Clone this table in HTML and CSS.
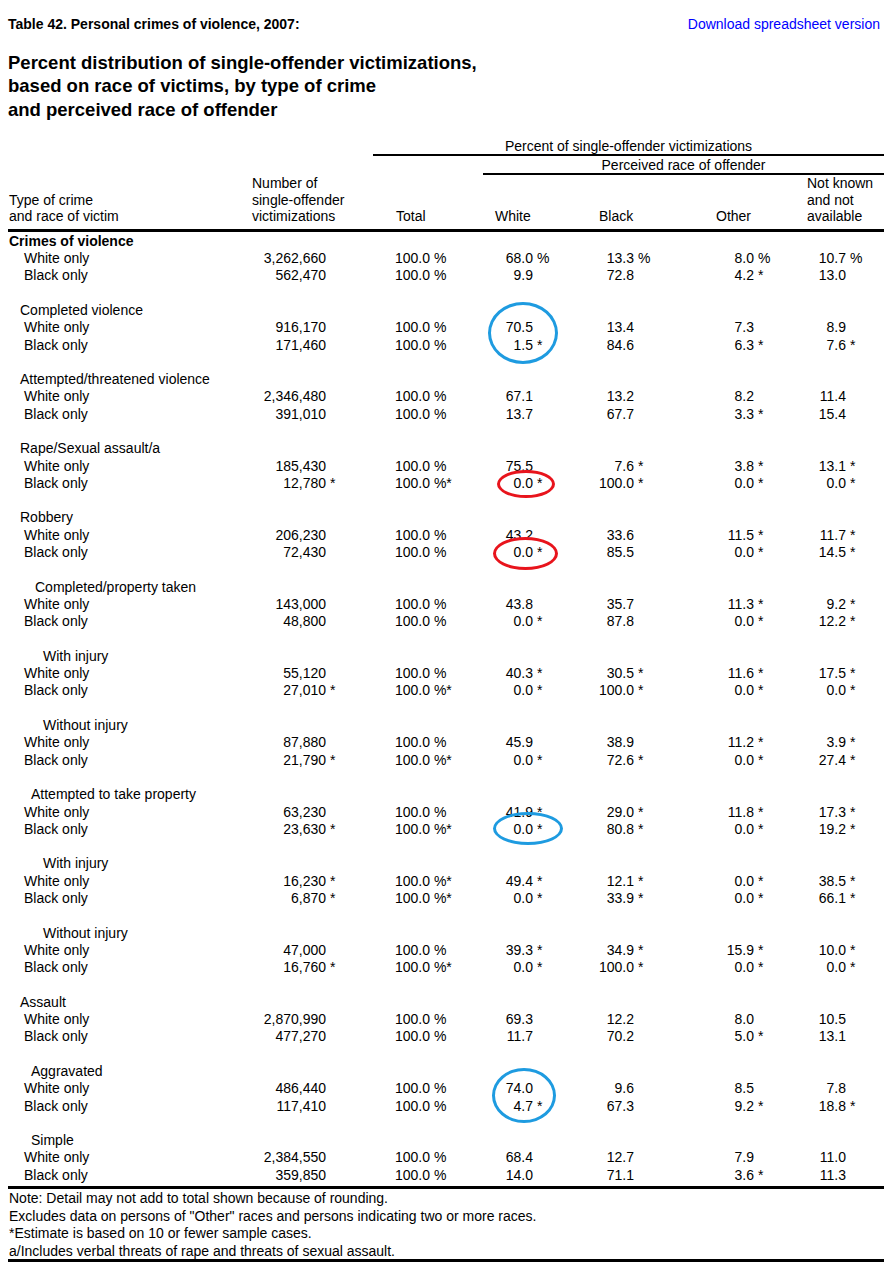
FILE: index.html
```html
<!DOCTYPE html>
<html lang="en">
<head>
<meta charset="utf-8">
<title>Table 42. Personal crimes of violence, 2007</title>
<link rel="stylesheet" href="styles.css">
</head>
<body>
<div class="page">
  <div class="top">
    <span class="tnum">Table 42. Personal crimes of violence, 2007:</span>
    <a class="dl" href="#">Download spreadsheet version</a>
  </div>
  <h1 class="title">Percent distribution of single-offender victimizations,<br>based on race of victims, by type of crime<br>and perceived race of offender</h1>

  <table class="data">
    <colgroup>
      <col class="c1"><col class="c2"><col class="c3"><col class="c4"><col class="c5"><col class="c6"><col class="c7">
    </colgroup>
    <thead>
      <tr class="h1"><th colspan="2"></th><th colspan="5" class="ln">Percent of single-offender victimizations</th></tr>
      <tr class="h2"><th colspan="3"></th><th colspan="4" class="ln">Perceived race of offender</th></tr>
      <tr class="h3">
        <th class="hl">Type of crime<br>and race of victim</th>
        <th class="hn">Number of<br>single-offender<br>victimizations</th>
        <th class="ht">Total</th>
        <th class="hc">White</th>
        <th class="hc">Black</th>
        <th class="hc">Other</th>
        <th class="hc">Not known<br>and not<br>available</th>
      </tr>
    </thead>
    <tbody>
      <tr><td class="g0">Crimes of violence</td><td colspan="6"></td></tr>
      <tr><td class="v">White only</td><td>3,262,660<span></span></td><td>100.0<span> %</span></td><td>68.0<span> %</span></td><td>13.3<span> %</span></td><td>8.0<span> %</span></td><td>10.7<span> %</span></td></tr>
      <tr><td class="v">Black only</td><td>562,470<span></span></td><td>100.0<span> %</span></td><td>9.9<span></span></td><td>72.8<span></span></td><td>4.2<span> *</span></td><td>13.0<span></span></td></tr>
      <tr class="sp"><td colspan="7"></td></tr>

      <tr><td class="g1">Completed violence</td><td colspan="6"></td></tr>
      <tr><td class="v">White only</td><td>916,170<span></span></td><td>100.0<span> %</span></td><td>70.5<span></span></td><td>13.4<span></span></td><td>7.3<span></span></td><td>8.9<span></span></td></tr>
      <tr><td class="v">Black only</td><td>171,460<span></span></td><td>100.0<span> %</span></td><td>1.5<span> *</span></td><td>84.6<span></span></td><td>6.3<span> *</span></td><td>7.6<span> *</span></td></tr>
      <tr class="sp"><td colspan="7"></td></tr>

      <tr><td class="g1">Attempted/threatened violence</td><td colspan="6"></td></tr>
      <tr><td class="v">White only</td><td>2,346,480<span></span></td><td>100.0<span> %</span></td><td>67.1<span></span></td><td>13.2<span></span></td><td>8.2<span></span></td><td>11.4<span></span></td></tr>
      <tr><td class="v">Black only</td><td>391,010<span></span></td><td>100.0<span> %</span></td><td>13.7<span></span></td><td>67.7<span></span></td><td>3.3<span> *</span></td><td>15.4<span></span></td></tr>
      <tr class="sp"><td colspan="7"></td></tr>

      <tr><td class="g1">Rape/Sexual assault/a</td><td colspan="6"></td></tr>
      <tr><td class="v">White only</td><td>185,430<span></span></td><td>100.0<span> %</span></td><td>75.5<span></span></td><td>7.6<span> *</span></td><td>3.8<span> *</span></td><td>13.1<span> *</span></td></tr>
      <tr><td class="v">Black only</td><td>12,780<span> *</span></td><td>100.0<span> %*</span></td><td>0.0<span> *</span></td><td>100.0<span> *</span></td><td>0.0<span> *</span></td><td>0.0<span> *</span></td></tr>
      <tr class="sp"><td colspan="7"></td></tr>

      <tr><td class="g1">Robbery</td><td colspan="6"></td></tr>
      <tr><td class="v">White only</td><td>206,230<span></span></td><td>100.0<span> %</span></td><td>43.2<span></span></td><td>33.6<span></span></td><td>11.5<span> *</span></td><td>11.7<span> *</span></td></tr>
      <tr><td class="v">Black only</td><td>72,430<span></span></td><td>100.0<span> %</span></td><td>0.0<span> *</span></td><td>85.5<span></span></td><td>0.0<span> *</span></td><td>14.5<span> *</span></td></tr>
      <tr class="sp"><td colspan="7"></td></tr>

      <tr><td class="g2">Completed/property taken</td><td colspan="6"></td></tr>
      <tr><td class="v">White only</td><td>143,000<span></span></td><td>100.0<span> %</span></td><td>43.8<span></span></td><td>35.7<span></span></td><td>11.3<span> *</span></td><td>9.2<span> *</span></td></tr>
      <tr><td class="v">Black only</td><td>48,800<span></span></td><td>100.0<span> %</span></td><td>0.0<span> *</span></td><td>87.8<span></span></td><td>0.0<span> *</span></td><td>12.2<span> *</span></td></tr>
      <tr class="sp"><td colspan="7"></td></tr>

      <tr><td class="g3">With injury</td><td colspan="6"></td></tr>
      <tr><td class="v">White only</td><td>55,120<span></span></td><td>100.0<span> %</span></td><td>40.3<span> *</span></td><td>30.5<span> *</span></td><td>11.6<span> *</span></td><td>17.5<span> *</span></td></tr>
      <tr><td class="v">Black only</td><td>27,010<span> *</span></td><td>100.0<span> %*</span></td><td>0.0<span> *</span></td><td>100.0<span> *</span></td><td>0.0<span> *</span></td><td>0.0<span> *</span></td></tr>
      <tr class="sp"><td colspan="7"></td></tr>

      <tr><td class="g3">Without injury</td><td colspan="6"></td></tr>
      <tr><td class="v">White only</td><td>87,880<span></span></td><td>100.0<span> %</span></td><td>45.9<span></span></td><td>38.9<span></span></td><td>11.2<span> *</span></td><td>3.9<span> *</span></td></tr>
      <tr><td class="v">Black only</td><td>21,790<span> *</span></td><td>100.0<span> %*</span></td><td>0.0<span> *</span></td><td>72.6<span> *</span></td><td>0.0<span> *</span></td><td>27.4<span> *</span></td></tr>
      <tr class="sp"><td colspan="7"></td></tr>

      <tr><td class="g2b">Attempted to take property</td><td colspan="6"></td></tr>
      <tr><td class="v">White only</td><td>63,230<span></span></td><td>100.0<span> %</span></td><td>41.9<span> *</span></td><td>29.0<span> *</span></td><td>11.8<span> *</span></td><td>17.3<span> *</span></td></tr>
      <tr><td class="v">Black only</td><td>23,630<span> *</span></td><td>100.0<span> %*</span></td><td>0.0<span> *</span></td><td>80.8<span> *</span></td><td>0.0<span> *</span></td><td>19.2<span> *</span></td></tr>
      <tr class="sp"><td colspan="7"></td></tr>

      <tr><td class="g3">With injury</td><td colspan="6"></td></tr>
      <tr><td class="v">White only</td><td>16,230<span> *</span></td><td>100.0<span> %*</span></td><td>49.4<span> *</span></td><td>12.1<span> *</span></td><td>0.0<span> *</span></td><td>38.5<span> *</span></td></tr>
      <tr><td class="v">Black only</td><td>6,870<span> *</span></td><td>100.0<span> %*</span></td><td>0.0<span> *</span></td><td>33.9<span> *</span></td><td>0.0<span> *</span></td><td>66.1<span> *</span></td></tr>
      <tr class="sp"><td colspan="7"></td></tr>

      <tr><td class="g3">Without injury</td><td colspan="6"></td></tr>
      <tr><td class="v">White only</td><td>47,000<span></span></td><td>100.0<span> %</span></td><td>39.3<span> *</span></td><td>34.9<span> *</span></td><td>15.9<span> *</span></td><td>10.0<span> *</span></td></tr>
      <tr><td class="v">Black only</td><td>16,760<span> *</span></td><td>100.0<span> %*</span></td><td>0.0<span> *</span></td><td>100.0<span> *</span></td><td>0.0<span> *</span></td><td>0.0<span> *</span></td></tr>
      <tr class="sp"><td colspan="7"></td></tr>

      <tr><td class="g1">Assault</td><td colspan="6"></td></tr>
      <tr><td class="v">White only</td><td>2,870,990<span></span></td><td>100.0<span> %</span></td><td>69.3<span></span></td><td>12.2<span></span></td><td>8.0<span></span></td><td>10.5<span></span></td></tr>
      <tr><td class="v">Black only</td><td>477,270<span></span></td><td>100.0<span> %</span></td><td>11.7<span></span></td><td>70.2<span></span></td><td>5.0<span> *</span></td><td>13.1<span></span></td></tr>
      <tr class="sp"><td colspan="7"></td></tr>

      <tr><td class="g2b">Aggravated</td><td colspan="6"></td></tr>
      <tr><td class="v">White only</td><td>486,440<span></span></td><td>100.0<span> %</span></td><td>74.0<span></span></td><td>9.6<span></span></td><td>8.5<span></span></td><td>7.8<span></span></td></tr>
      <tr><td class="v">Black only</td><td>117,410<span></span></td><td>100.0<span> %</span></td><td>4.7<span> *</span></td><td>67.3<span></span></td><td>9.2<span> *</span></td><td>18.8<span> *</span></td></tr>
      <tr class="sp"><td colspan="7"></td></tr>

      <tr><td class="g2b">Simple</td><td colspan="6"></td></tr>
      <tr><td class="v">White only</td><td>2,384,550<span></span></td><td>100.0<span> %</span></td><td>68.4<span></span></td><td>12.7<span></span></td><td>7.9<span></span></td><td>11.0<span></span></td></tr>
      <tr class="last"><td class="v">Black only</td><td>359,850<span></span></td><td>100.0<span> %</span></td><td>14.0<span></span></td><td>71.1<span></span></td><td>3.6<span> *</span></td><td>11.3<span></span></td></tr>
    </tbody>
  </table>

  <div class="notes">
    <p>Note: Detail may not add to total shown because of rounding.</p>
    <p>Excludes data on persons of "Other" races and persons indicating two or more races.</p>
    <p>*Estimate is based on 10 or fewer sample cases.</p>
    <p>a/Includes verbal threats of rape and threats of sexual assault.</p>
  </div>

  <div class="mark blue m1"></div>
  <div class="mark red m2"></div>
  <div class="mark red m3"></div>
  <div class="mark blue m4"></div>
  <div class="mark blue m5"></div>
</div>
</body>
</html>
```

FILE: styles.css
```css
html, body {
  margin: 0;
  padding: 0;
  background: #ffffff;
}

body {
  font-family: "Liberation Sans", Arial, sans-serif;
  font-size: 14px;
  color: #000000;
}

.page {
  position: relative;
  width: 876px;
  padding: 16px 9px 0 8px;
}

.top {
  display: flex;
  justify-content: space-between;
  align-items: center;
  padding-right: 4px;
  line-height: 16px;
}

.tnum {
  font-weight: bold;
}

.dl {
  color: #0000ff;
  text-decoration: none;
}

.title {
  margin: 19px 0 0 0;
  font-size: 18.5px;
  font-weight: bold;
  line-height: 23.4px;
}

.data {
  margin-top: 17px;
  width: 876px;
  table-layout: fixed;
  border-collapse: separate;
  border-spacing: 0;
}

.c1 { width: 232px; }
.c2 { width: 133px; }
.c3 { width: 110px; }
.c4 { width: 104px; }
.c5 { width: 117px; }
.c6 { width: 91px; }
.c7 { width: 89px; }

.data th {
  padding: 0;
  font-weight: normal;
  text-align: left;
}

.h1 th {
  line-height: 15px;
  padding-top: 1px;
}

.h1 .ln {
  text-align: center;
  border-bottom: 2px solid #000;
}

.h2 th {
  line-height: 16px;
  padding-top: 1px;
}

.h2 .ln {
  text-align: center;
  border-bottom: 2px solid #000;
}

.h3 th {
  vertical-align: bottom;
  line-height: 16.5px;
  padding-bottom: 4px;
  border-bottom: 3px solid #000;
}

.h3 .hl { padding-left: 1px; }
.h3 .hn { padding-left: 12px; }
.h3 .ht { padding-left: 23px; }
.h3 .hc { padding-left: 12px; }

.data td {
  padding: 2px 0 0 0;
  line-height: 15.3px;
  text-align: right;
  white-space: nowrap;
}

.data td span {
  display: inline-block;
  text-align: left;
  white-space: pre;
}

.data td:nth-child(2) span { width: 47px; }
.data td:nth-child(3) span { width: 53px; }
.data td:nth-child(4) span { width: 54px; }
.data td:nth-child(5) span { width: 70px; }
.data td:nth-child(6) span { width: 41px; }
.data td:nth-child(7) span { width: 38px; }

.data td.g0,
.data td.g1,
.data td.g2,
.data td.g2b,
.data td.g3,
.data td.v {
  text-align: left;
}

.data td.g0 { padding-left: 1px; font-weight: bold; }
.data td.g1 { padding-left: 12px; }
.data td.g2 { padding-left: 27px; }
.data td.g2b { padding-left: 23px; }
.data td.g3 { padding-left: 35px; }
.data td.v { padding-left: 16px; }

.data .sp td {
  padding: 0;
  height: 17.3px;
}

.data .last td {
  padding-bottom: 3px;
}

.notes {
  border-top: 3px solid #000;
  border-bottom: 3px solid #000;
  padding-left: 1px;
}

.notes p {
  margin: 0;
  padding-top: 1px;
  line-height: 16.6px;
}

.mark {
  position: absolute;
  border-radius: 50%;
  border: 3px solid;
  box-sizing: border-box;
}

.blue { border-color: #1e9be0; }
.red { border-color: #e8141c; }

.m1 { left: 488px; top: 302px; width: 70px; height: 62px; }
.m2 { left: 497px; top: 470px; width: 58px; height: 28px; }
.m3 { left: 493px; top: 537px; width: 65px; height: 33px; }
.m4 { left: 493px; top: 812px; width: 70px; height: 33px; }
.m5 { left: 492px; top: 1068px; width: 64px; height: 55px; }
```
